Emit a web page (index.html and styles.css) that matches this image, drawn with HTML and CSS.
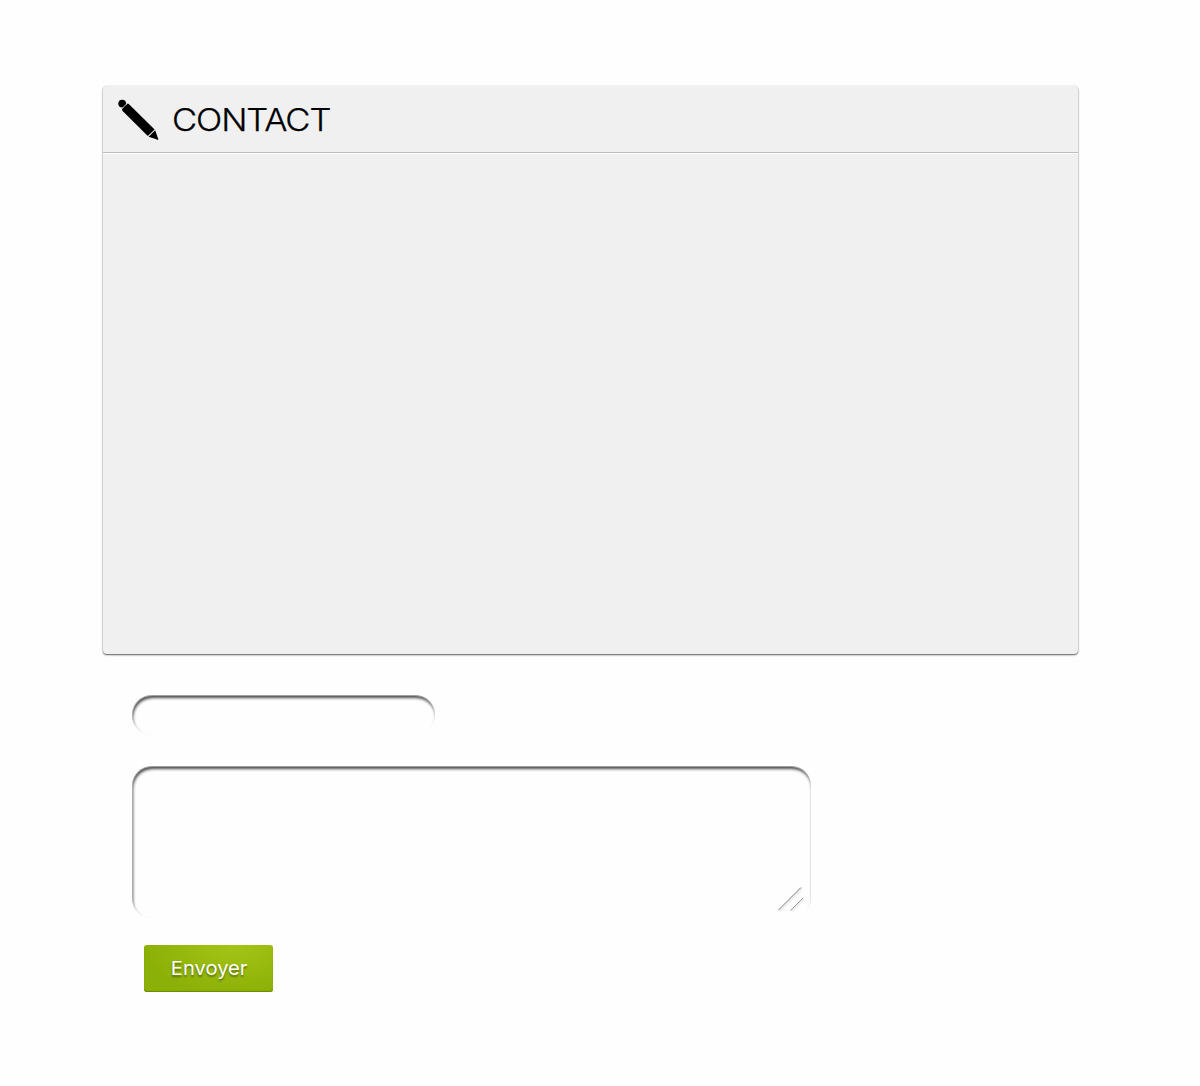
FILE: index.html
```html
<!DOCTYPE html>
<html lang="fr">
<head>
<meta charset="utf-8">
<title>Contact</title>
<link rel="stylesheet" href="styles.css">
</head>
<body>
<main class="page">
  <section class="panel">
    <header class="panel-header">
      <svg class="pencil" viewBox="0 0 42 42" width="42" height="42" aria-hidden="true">
        <circle cx="4.2" cy="4.6" r="3.9"/>
        <path d="M4 10 9.6 4.4 10.8 5 36.6 30.5 29.8 37.1 4.4 11.8Z"/>
        <path d="M30.6 37.8 37.2 31.3 40.6 41Z"/>
        <path class="pencil-gap" d="M3.8 9.7 9.3 4.2"/>
      </svg>
      <h1 class="title">CONTACT</h1>
    </header>
  </section>
  <form class="form">
    <input class="field field-line" type="text" aria-label="Nom">
    <div class="message">
      <textarea class="field field-area" aria-label="Message"></textarea>
      <svg class="grip" viewBox="0 0 28 28" width="28" height="28" aria-hidden="true">
        <path class="grip-shade" d="M2.5 26.5 25.5 3.5M14.5 26.5 27 14"/>
        <path class="grip-long" d="M1.5 25 24 2.5"/>
        <path class="grip-short" d="M13.5 25.5 26 13"/>
      </svg>
    </div>
    <button class="send" type="button"><span class="send-label">Envoyer</span></button>
  </form>
</main>
</body>
</html>
```

FILE: styles.css
```css
* { box-sizing: border-box; }
body {
  margin: 0;
  background: #fefefe;
  font-family: Inter, "Liberation Sans", sans-serif;
}
.page { padding: 86px 122px 0 103px; }
.panel {
  height: 568px;
  background: #f0f0f0;
  border-radius: 4px;
  box-shadow: 0 1px 2px rgba(0, 0, 0, .5), 0 1px 1px rgba(0, 0, 0, .2), 0 0 0 .5px rgba(0, 0, 0, .06);
}
.panel-header {
  display: flex;
  height: 67px;
  padding: 13px 0 0 15px;
  border-bottom: 1px solid #bdbdbd;
  box-shadow: 0 1px 0 #fff;
}
.pencil { flex: none; fill: #000; }
.pencil-gap { stroke: #bbb; stroke-width: 1; }
.title {
  margin: 0 0 0 11.5px;
  font-size: 31px;
  font-weight: 300;
  line-height: 42px;
  letter-spacing: -1px;
  color: #000;
  -webkit-text-stroke: .25px #000;
  transform: scaleX(1.115);
  transform-origin: 0 50%;
}
.form {
  display: flex;
  flex-direction: column;
  align-items: flex-start;
  padding: 41px 0 0 29px;
}
.field {
  display: block;
  padding: 10px 18px;
  border: 0;
  outline: 0;
  border-radius: 20px;
  background: #fefefe;
  font: 16px Inter, sans-serif;
  box-shadow:
    inset 0 1px 0 rgba(255, 255, 255, .45),
    inset 1px 0 0 rgba(255, 255, 255, .3),
    inset 1px 3px 3px rgba(0, 0, 0, .7);
}
.field-line { width: 303px; height: 40px; }
.message { position: relative; margin-top: 31px; }
.field-area { width: 679px; height: 152px; resize: none; }
.grip { position: absolute; right: 6px; bottom: 5px; fill: none; }
.grip-shade { stroke: #eee; stroke-width: 2; }
.grip-long { stroke: #777; stroke-width: 1; }
.grip-short { stroke: #999; stroke-width: 1; }
.send {
  width: 129.5px;
  height: 47px;
  margin: 27px 0 0 11.5px;
  padding: 0 0 0 1px;
  border: 0;
  border-radius: 3px;
  background: radial-gradient(ellipse 90px 50px at 70% 0, #a5c515, #8bb007);
  box-shadow: inset 0 -1px 1px #6b8a00;
  color: #fff;
  font: 19px/48px Inter, sans-serif;
  text-shadow: 0 2px 2px rgba(0, 0, 0, .4);
}
.send-label { display: inline-block; transform: scaleX(1.06); }
```
